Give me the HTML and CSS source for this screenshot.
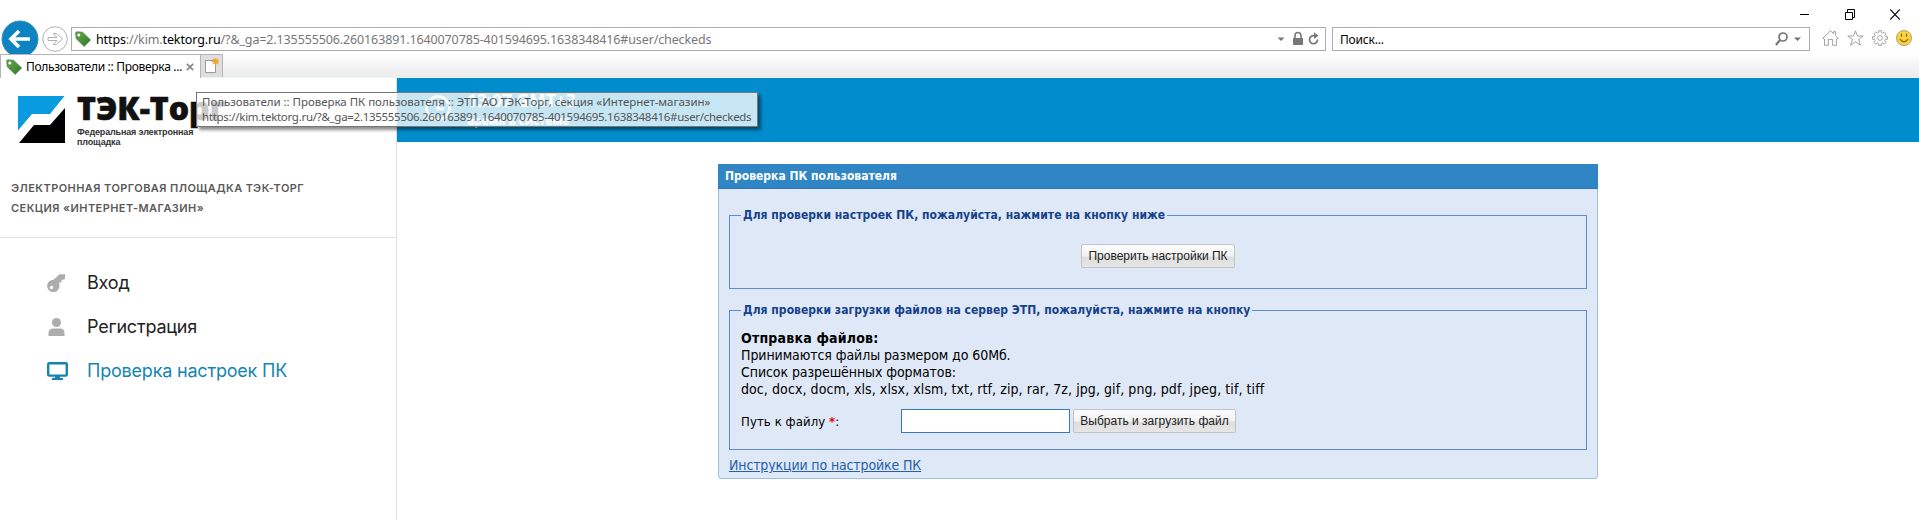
FILE: index.html
```html
<!DOCTYPE html>
<html lang="ru">
<head>
<meta charset="utf-8">
<title>Пользователи :: Проверка ПК пользователя</title>
<link rel="stylesheet" href="styles.css">
</head>
<body>
<svg class="defs" width="0" height="0"><defs>
  <linearGradient id="leaf" x1="0" y1="0" x2="1" y2="1"><stop offset="0" stop-color="#6aa84a"/><stop offset="1" stop-color="#2f7a2c"/></linearGradient>
  <symbol id="tag" viewBox="0 0 16 16"><path d="M.6 2.2Q.6 .8 2 .8L7.600 1.200 15.600 9 9.200 15.400 1.200 7.700Z" fill="url(#leaf)" stroke="#3c7a34" stroke-width=".6"/><circle cx="3.800" cy="4" r="1.500" fill="#fff"/></symbol>
</defs></svg>
<header class="browser">
  <div class="window-buttons">
    <svg width="10" height="11" viewBox="0 0 10 11"><path d="M0 5.500H9" stroke="#000"/></svg>
    <svg width="10" height="11" viewBox="0 0 10 11"><path d="M.5 3.500H7.500V10.500H.5ZM2.500 3V.5H9.500V8.500H8" fill="none" stroke="#000"/></svg>
    <svg width="10" height="11" viewBox="0 0 10 11"><path d="M.2.500L9.800 10.500M9.800.500L.2 10.500" stroke="#000" stroke-width="1.100"/></svg>
  </div>
  <div class="toolbar">
    <svg class="back" width="38" height="38" viewBox="0 0 38 38"><circle cx="19" cy="19" r="18" fill="#0d83c2" stroke="#3d8fba"/><path d="M29 19H11M18 11L10 19L18 27" fill="none" stroke="#fff" stroke-width="3.600"/></svg>
    <svg class="forward" width="26" height="26" viewBox="0 0 26 26"><circle cx="13" cy="13" r="12.300" fill="#fff" stroke="#a8a8a8" stroke-width=".9"/><path d="M6 11.500H15L11.500 7.500H14.500L20.500 13 14.500 18.500H11.500L15 14.500H6Z" fill="#fff" stroke="#a8a8a8" stroke-width=".9"/></svg>
    <div class="address">
      <svg width="16" height="16"><use href="#tag"/></svg>
      <span class="url t"><b>https</b>://kim.<b>tektorg.ru</b>/?&amp;_ga=2.135555506.260163891.1640070785-401594695.1638348416#user/checkeds</span>
      <svg width="46" height="16" viewBox="0 0 46 16"><path d="M1.500 6.500H8.500L5 10Z" fill="#777"/><path d="M17 7H27V14H17Z" fill="#777"/><path d="M19 7V4.500a3 3 0 0 1 6 0V7" fill="none" stroke="#777" stroke-width="1.600"/><path d="M41.500 8.500A4 4 0 1 1 37.500 4.700H39" fill="none" stroke="#777" stroke-width="1.700"/><path d="M38 1.300L42.500 4.700 38 8Z" fill="#777"/></svg>
    </div>
    <div class="search"><span class="t find">Поиск...</span>
      <svg width="28" height="16" viewBox="0 0 28 16"><circle cx="8" cy="6" r="4" fill="none" stroke="#777" stroke-width="1.700"/><path d="M5 9L1 14" stroke="#777" stroke-width="2.200"/><path d="M19 6.500H26L22.500 10Z" fill="#777"/></svg>
    </div>
    <div class="tools">
      <svg width="17" height="16" viewBox="0 0 17 16"><path d="M.7 8.300L8.500.7 11.500 3.600V1.600H13.500V5.600L16.300 8.300 14.500 9V15.300H10.700V9.500H6.300V15.300H2.500V9Z" fill="#fff" stroke="#999" stroke-width=".9"/></svg>
      <svg width="17" height="16" viewBox="0 0 17 16"><path d="M8.500.8L10.500 6H16.200L11.600 9.400 13.400 15.200 8.500 11.700 3.600 15.200 5.400 9.400.8 6H6.500Z" fill="#fff" stroke="#999" stroke-width=".9"/></svg>
      <svg width="16" height="16" viewBox="0 0 16 16"><path d="M6.700.6H9.300V2.600L10.700 3.200 12.200 1.800 14.200 3.800 12.800 5.300 13.400 6.700H15.400V9.300H13.400L12.800 10.700 14.200 12.200 12.200 14.200 10.700 12.800 9.300 13.400V15.400H6.700V13.400L5.300 12.800 3.800 14.200 1.800 12.200 3.200 10.700 2.600 9.300H.6V6.700H2.600L3.200 5.300 1.800 3.800 3.800 1.800 5.300 3.200 6.700 2.600Z" fill="#fff" stroke="#999" stroke-width=".9"/><circle cx="8" cy="8" r="2.400" fill="none" stroke="#999" stroke-width=".9"/></svg>
      <svg width="16" height="16" viewBox="0 0 16 16"><circle cx="8" cy="8" r="7.500" fill="#fbd33c" stroke="#a99a55" stroke-width=".9"/><path d="M5.500 3.800V6.800M10.500 3.800V6.800M3.800 9.200Q8 14.300 12.200 9.200" fill="none" stroke="#806416" stroke-width="1.200"/></svg>
    </div>
  </div>
  <div class="tabs">
    <div class="tab"><svg width="16" height="16"><use href="#tag"/></svg><span class="t tabname">Пользователи :: Проверка ...</span><svg width="8" height="8" viewBox="0 0 8 8"><path d="M.8.800L7.200 7.200M7.200.800L.8 7.200" stroke="#888" stroke-width="1.700"/></svg></div>
    <div class="newtab"><svg width="16" height="16" viewBox="0 0 16 16"><path d="M2.500 2.500H12.500V14.500H2.500Z" fill="#fff" stroke="#999"/><path d="M12.500 0V7M9 3.500H16M10 1L15 6M15 1L10 6" stroke="#eea62c" stroke-width="1.300"/></svg></div>
  </div>
</header>
<div class="page">
  <aside class="sidebar">
    <div class="brand">
      <div class="logo">
        <svg width="47" height="47" viewBox="0 0 47 47"><path d="M0 0H46.500L32 18H14L0 34.500Z" fill="#099be0"/><path d="M1 47L16 29H32L47 12V47Z" fill="#000"/></svg>
        <div class="logo-text"><span class="t name">ТЭК-Торг</span><span class="t sub">Федеральная электронная</span><span class="t sub">площадка</span></div>
      </div>
      <p class="section"><span class="t">ЭЛЕКТРОННАЯ ТОРГОВАЯ ПЛОЩАДКА ТЭК-ТОРГ</span><br><span class="t">СЕКЦИЯ «ИНТЕРНЕТ-МАГАЗИН»</span></p>
    </div>
    <nav class="menu">
      <a><svg width="21" height="18" viewBox="0 0 21 18"><path d="M12.500.2H18V5L14.800 6 14.300 8 12 9.200 12.500 12A6.200 6.200 0 1 1 6.500 5.800Z" fill="#adadad"/><circle cx="4.500" cy="13.500" r="1.700" fill="#fff"/></svg><span class="t">Вход</span></a>
      <a><svg width="21" height="18" viewBox="0 0 21 18"><circle cx="9.500" cy="4.500" r="4.500" fill="#adadad"/><path d="M1.500 18V15Q1.500 10.500 6 10.500H13Q17.500 10.500 17.500 15V18Z" fill="#adadad"/></svg><span class="t">Регистрация</span></a>
      <a class="active"><svg width="21" height="18" viewBox="0 0 21 18"><rect x="1.200" y="1.200" width="18.600" height="12.400" rx="1" fill="none" stroke="#1684b2" stroke-width="2.400"/><path d="M8 14H13V16H16V18H5V16H8Z" fill="#1684b2"/></svg><span class="t">Проверка настроек ПК</span></a>
    </nav>
  </aside>
  <main class="content">
    <div class="topbar">
      <svg width="26" height="26" viewBox="0 0 26 26"><circle cx="13" cy="13" r="11.500" fill="none" stroke="#fff" stroke-width="2.500"/><path d="M13 6V14H19" fill="none" stroke="#fff" stroke-width="2.500"/></svg>
      <div class="clock"><span class="t time">13:07 GMT+3</span><span class="t timelabel">время в системе</span></div>
    </div>
    <section class="panel">
      <h1>Проверка ПК пользователя</h1>
      <div class="panel-body">
        <fieldset class="check"><legend>Для проверки настроек ПК, пожалуйста, нажмите на кнопку ниже</legend><div class="center"><button class="btn btn-check">Проверить настройки ПК</button></div></fieldset>
        <fieldset class="upload"><legend>Для проверки загрузки файлов на сервер ЭТП, пожалуйста, нажмите на кнопку</legend>
          <div class="info"><strong class="t">Отправка файлов:</strong><span class="t tight">Принимаются файлы размером до 60Мб.</span><span class="t tight">Список разрешённых форматов:</span><span class="t">doc, docx, docm, xls, xlsx, xlsm, txt, rtf, zip, rar, 7z, jpg, gif, png, pdf, jpeg, tif, tiff</span></div>
          <div class="row"><label>Путь к файлу <em>*</em>:</label><input type="text"><button class="btn btn-upload">Выбрать и загрузить файл</button></div>
        </fieldset>
        <a class="help">Инструкции по настройке ПК</a>
      </div>
    </section>
  </main>
</div>
<div class="tooltip"><span class="t tip-title">Пользователи :: Проверка ПК пользователя :: ЭТП АО ТЭК-Торг, секция «Интернет-магазин»</span><span class="t tip-url">https://kim.tektorg.ru/?&amp;_ga=2.135555506.260163891.1640070785-401594695.1638348416#user/checkeds</span></div>
</body>
</html>
```
FILE: styles.css
```css
* { box-sizing: border-box; }
body { margin: 0; height: 520px; overflow: hidden; background: #fff; color: #000; font-family: "Noto Sans", sans-serif; }
svg { display: block; flex: none; }
.defs { position: absolute; }
.t { white-space: nowrap; }

/* Browser window */
.browser { height: 78px; display: flex; flex-direction: column; background: #fff; }
.window-buttons { height: 20px; flex: none; display: flex; justify-content: flex-end; gap: 35px; padding: 9px 19px 0 0; }
.toolbar { height: 34px; flex: none; display: flex; align-items: flex-start; padding: 0 7px 0 1px; overflow: hidden; }
.forward { margin: 6px 3px 0 3px; }
.address, .search { height: 24px; margin-top: 7px; border: 1px solid #adadad; display: flex; align-items: center; }
.address { width: 1255px; padding: 0 3px; }
.url { color: #777; margin-left: 5px; flex: 1; font-size: 12.5px; letter-spacing: -.125px; }
.url b { font-weight: 400; color: #000; }
.search { width: 478px; margin-left: 6px; padding: 0 6px 0 7px; justify-content: space-between; }
.find { font-size: 12px; letter-spacing: -.2px; }
.tools { display: flex; gap: 8px; margin: 10px 0 0 auto; }
.tabs { height: 24px; flex: none; display: flex; background: linear-gradient(#fefefe, #ececec); border-bottom: 1px solid #e9f5f8; }
.tab { width: 201px; height: 24px; background: #fff; border: 1px solid #b5b5b5; border-bottom: 0; display: flex; align-items: center; padding: 0 6px 0 5px; }
.tabname { margin-left: 4px; flex: 1; min-width: 0; font-size: 12px; letter-spacing: -.3px; }
.newtab { width: 22px; height: 23px; background: #dedede; border: 1px solid #b5b5b5; border-left: 0; border-bottom: 0; padding: 3px 2px; }

/* Sidebar */
.page { display: flex; height: 442px; }
.sidebar { width: 397px; border-right: 1px solid #e0e0e0; }
.brand { height: 160px; border-bottom: 1px solid #e0e0e0; padding: 18px 0 0 18px; }
.logo { display: flex; gap: 12px; height: 54px; }
.logo-text { display: flex; flex-direction: column; align-items: flex-start; font-family: "Open Sans", sans-serif; font-weight: 800; color: #111; }
.name { font-size: 32px; line-height: 30px; margin: -3px 0 4px; -webkit-text-stroke: .6px #111; }
.sub { font-family: "Liberation Sans", sans-serif; font-weight: 700; font-size: 9px; line-height: 10px; color: #333; letter-spacing: -.15px; }
.section { margin: 28px 0 0 -7px; font: 600 11px/20px Inter, sans-serif; color: #5a5a5a; letter-spacing: .43px; }
.menu { padding: 23px 0 0 47px; }
.menu a { display: flex; align-items: center; height: 44px; font: 400 18px/24px Inter, sans-serif; color: #222; letter-spacing: -.2px; }
.menu a span { margin-left: 19px; }
.menu a.active { color: #1684b2; }

/* Content */
.content { flex: 1; display: flex; flex-direction: column; }
.topbar { height: 64px; flex: none; background: #018dcd; display: flex; padding: 17px 0 0 28px; color: #fff; }
.clock { display: flex; flex-direction: column; align-items: flex-start; margin-left: 16px; font-family: "Open Sans", sans-serif; font-weight: 700; }
.time { font-size: 17.5px; line-height: 18px; margin-top: -4px; }
.timelabel { font-size: 12px; line-height: 14px; margin-top: 5px; letter-spacing: -.2px; }
.panel { width: 880px; height: 315px; margin: 22px 0 0 321px; border: 1px solid #9dbfe0; border-radius: 0 0 3px 3px; background: #dfe8f6; font-family: "DejaVu Sans Condensed", "DejaVu Sans", sans-serif; font-stretch: condensed; }
.panel h1 { margin: -1px -1px 0; height: 25px; background: #3085c5; border-bottom: 1px solid #2f78b3; color: #fff; font-size: 12px; font-weight: 700; line-height: 25px; padding-left: 7px; }
.panel-body { padding: 18px 10px 0; }
fieldset { margin: 0; min-width: 0; border: 1px solid #5f8fc9; padding: 0 11px; }
legend { font-size: 12px; font-weight: 700; line-height: 16px; color: #15428b; padding: 0 2px; letter-spacing: .04px; }
.check { height: 82px; padding-top: 21px; }
.center { text-align: center; }
.upload { height: 148px; margin-top: 13px; }
.btn { height: 24px; border: 1px solid #c4c4c4; border-radius: 2px; background: linear-gradient(#fafafa 0 10%, #f2f2f2 50%, #dedede 55%, #e6e6e6); font: 12px/20px "Liberation Sans", sans-serif; color: #222; padding: 0; }
.btn-check { width: 154px; }
.btn-upload { width: 163px; margin-left: 3px; }
.info { display: flex; flex-direction: column; align-items: flex-start; font-size: 14px; line-height: 17px; padding-top: 11px; letter-spacing: .08px; }
.info strong { letter-spacing: .2px; line-height: 18px; }
.info .tight { letter-spacing: -.08px; }
.row { display: flex; align-items: center; margin-top: 11px; font-size: 13px; letter-spacing: .1px; }
.row label { width: 160px; }
.row em { color: #e00; font-style: normal; font-weight: 700; }
.row input { width: 169px; height: 24px; border: 1px solid #3c78b8; background: #fff; padding: 0; }
.help { display: block; color: #2460a8; text-decoration: underline; font-size: 14px; line-height: 18px; margin-top: 6px; letter-spacing: -.14px; }

/* Tab tooltip */
.tooltip { position: absolute; left: 196px; top: 92px; width: 562px; height: 35px; border: 1px solid #777; background: rgba(255,255,255,.78); box-shadow: 3px 3px 3px rgba(0,0,0,.45); display: flex; flex-direction: column; padding: 1px 0 0 5px; font-size: 11.5px; line-height: 15px; color: #555; }
.tip-title { letter-spacing: -.03px; }
.tip-url { letter-spacing: -.29px; }
```
